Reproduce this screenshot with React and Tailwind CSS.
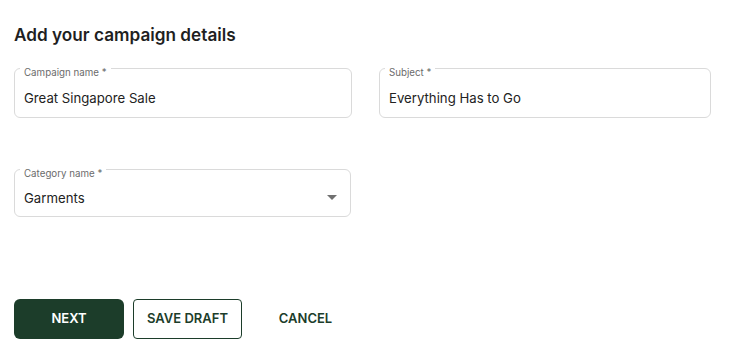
import React, { useState } from 'react';

function OutlinedField({ label, value, width, height, padTop, children }) {
  return (
    <div
      className={`relative rounded-md border border-[#dadada] bg-white px-[9px] ${width} ${height} ${padTop}`}
    >
      <span className="absolute left-[5px] top-[-2px] bg-white px-[4px] text-[9.75px] leading-[11px] text-[#6b6b6b]">
        {label}
      </span>
      <div className="flex items-center justify-between text-[13.2px] leading-[20px] text-[#222]">
        <span>{value}</span>
        {children}
      </div>
    </div>
  );
}

export default function App() {
  const [campaign] = useState({
    name: 'Great Singapore Sale',
    subject: 'Everything Has to Go',
    category: 'Garments',
  });

  return (
    <div className="min-h-[360px] bg-white px-[14px] pt-[23px] font-['Inter',sans-serif]">
      <h1 className="text-[17.2px] font-semibold leading-[24px] text-[#1f1f1f]">
        Add your campaign details
      </h1>

      <div className="mt-[21px] flex gap-[27px]">
        <OutlinedField label="Campaign name *" value={campaign.name} width="w-[338px]" height="h-[50px]" padTop="pt-[19px]" />
        <OutlinedField label="Subject *" value={campaign.subject} width="w-[332px]" height="h-[50px]" padTop="pt-[19px]" />
      </div>

      <div className="mt-[51px]">
        <OutlinedField label="Category name *" value={campaign.category} width="w-[337px]" height="h-[48px]" padTop="pt-[18px]">
          <svg width="10" height="5" viewBox="0 0 10 5" className="mr-[4px] mt-[-2px]">
            <path d="M0 0h10L5 5z" fill="#707070" />
          </svg>
        </OutlinedField>
      </div>

      <div className="mt-[82px] flex gap-[9px]">
        <button className="h-10 w-[110px] rounded-md bg-[#1c3d2a] text-[13px] font-semibold text-white">
          NEXT
        </button>
        <button className="h-10 w-[109px] rounded-[4px] border border-[#1c3d2a] bg-white text-[13px] font-semibold text-[#1c3d2a]">
          SAVE DRAFT
        </button>
        <button className="h-10 w-[109px] bg-transparent text-[13px] font-semibold text-[#1c3d2a]">
          CANCEL
        </button>
      </div>
    </div>
  );
}
